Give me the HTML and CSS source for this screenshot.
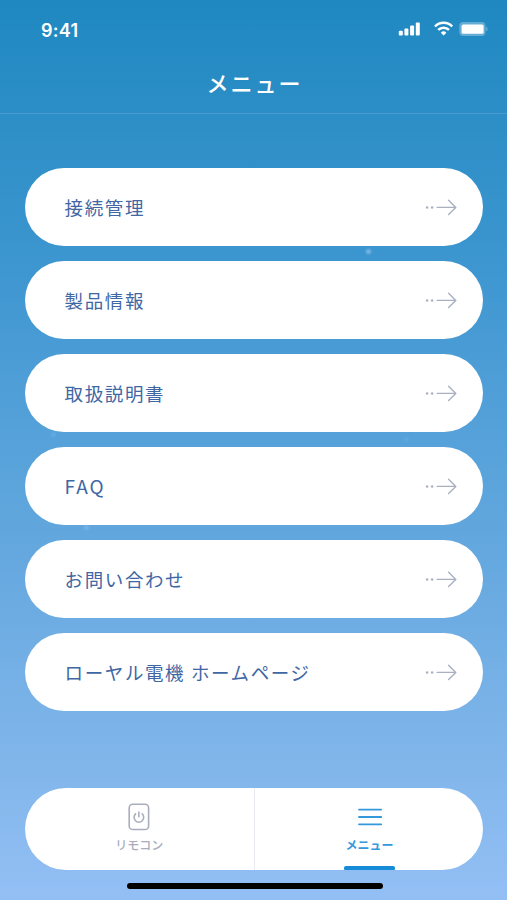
FILE: index.html
```html
<!DOCTYPE html>
<html lang="ja">
<head>
<meta charset="utf-8">
<title>メニュー</title>
<link rel="stylesheet" href="styles.css">
</head>
<body>
<svg class="defs" width="0" height="0" aria-hidden="true">
  <symbol id="arrow" viewBox="0 0 34 18">
    <path d="M12.2 9.4H30.8M23.6 2.2L30.8 9.4L23.6 16.6" fill="none" stroke="currentColor" stroke-width="1.4" stroke-linecap="round" stroke-linejoin="round"/>
    <circle cx="2.1" cy="9.4" r="1.25" fill="currentColor"/>
    <circle cx="7.1" cy="9.4" r="1.25" fill="currentColor"/>
  </symbol>
</svg>
<div class="screen">
  <i class="spark spark-a"></i><i class="spark spark-b"></i><i class="spark spark-c"></i><i class="spark spark-d"></i>
  <div class="status">
    <span class="time">9:41</span>
    <svg class="status-icons" viewBox="0 0 92 16" fill="#fff">
      <rect x="0.8" y="10.7" width="4" height="4.8" rx="1"/>
      <rect x="6.4" y="8.4" width="4" height="7.1" rx="1"/>
      <rect x="12.1" y="5.4" width="4" height="10.1" rx="1"/>
      <rect x="17.8" y="2.4" width="4" height="13.1" rx="1"/>
      <g fill="none" stroke="#fff" stroke-width="2.5">
        <path d="M37 6.5A12 12 0 0 1 54.2 6.5"/>
        <path d="M40.2 9.9A7.6 7.6 0 0 1 51 9.9"/>
      </g>
      <path d="M45.6 15.6L42.8 12.7A4 4 0 0 1 48.4 12.7Z"/>
      <rect x="61.3" y="2" width="26.2" height="14" rx="4" opacity=".3"/>
      <path d="M88.3 6.5Q90.8 9 88.3 11.5Z" opacity=".4"/>
      <rect x="63.6" y="4.6" width="22" height="9.2" rx="1.6"/>
    </svg>
  </div>
  <header class="header"><h1>メニュー</h1></header>
  <main class="menu">
    <a class="item"><span>接続管理</span><svg class="arrow"><use href="#arrow"/></svg></a>
    <a class="item"><span>製品情報</span><svg class="arrow"><use href="#arrow"/></svg></a>
    <a class="item"><span>取扱説明書</span><svg class="arrow"><use href="#arrow"/></svg></a>
    <a class="item"><span class="latin">FAQ</span><svg class="arrow"><use href="#arrow"/></svg></a>
    <a class="item"><span>お問い合わせ</span><svg class="arrow"><use href="#arrow"/></svg></a>
    <a class="item"><span>ローヤル電機 ホームページ</span><svg class="arrow"><use href="#arrow"/></svg></a>
  </main>
  <nav class="tabs">
    <a class="tab">
      <svg class="tab-icon" viewBox="0 0 28 28" fill="none" stroke="currentColor" stroke-width="1.6" stroke-linecap="round">
        <rect x="4.2" y="1.3" width="19.4" height="25.2" rx="3.6"/>
        <path d="M10.6 10.9A4.8 4.8 0 1 0 17.2 10.9M13.9 9V13.8"/>
      </svg>
      <span>リモコン</span>
    </a>
    <a class="tab active">
      <svg class="tab-icon" viewBox="0 0 28 28" fill="none" stroke="currentColor" stroke-width="1.8" stroke-linecap="round">
        <path d="M3 6.6H25.2M3 14H25.2M3 21.3H25.2"/>
      </svg>
      <span>メニュー</span>
    </a>
  </nav>
  <div class="home"></div>
</div>
</body>
</html>
```

FILE: styles.css
```css
* { box-sizing: border-box; }

body {
  margin: 0;
  font-family: "Noto Sans CJK JP", "Noto Sans", sans-serif;
}

.defs { display: none; }

.screen {
  position: relative;
  display: flex;
  flex-direction: column;
  height: 900px;
  overflow: hidden;
  background: linear-gradient(#1f88c1 0, #2c8ec6 110px, #3b95cf 250px, #519fd8 400px, #62a7de 540px, #73afe5 660px, #83b7eb 780px, #93bff5 900px);
}

.status {
  display: flex;
  justify-content: space-between;
  align-items: center;
  height: 58px;
  padding: 3px 17px 0 41px;
  color: #fff;
}

.time {
  font: 600 18px/20px Inter, sans-serif;
  letter-spacing: 0.3px;
}

.status-icons { width: 92px; height: 16px; margin-top: -5px; }

.header {
  display: flex;
  align-items: center;
  justify-content: center;
  height: 56px;
  padding-bottom: 8px;
  border-bottom: 1px solid #4b9bd0;
}

.header h1 {
  margin: 0;
  color: #fff;
  font-size: 22px;
  font-weight: 500;
  line-height: 30px;
  letter-spacing: 2px;
  text-indent: 2px;
}

.menu {
  display: flex;
  flex-direction: column;
  gap: 14.9px;
  padding: 54.3px 24.5px 0 25px;
}

.item {
  display: flex;
  align-items: center;
  justify-content: space-between;
  height: 78px;
  padding: 0 24px 0 39.6px;
  border-radius: 39px;
  background: #fff;
  color: #3f67a4;
  font-size: 18.5px;
  line-height: 28px;
  letter-spacing: 1.6px;
}

.latin { font-size: 19px; letter-spacing: 1.9px; }

.arrow { width: 34px; height: 18px; color: #a9b1c1; }

.tabs {
  display: grid;
  grid-template-columns: 1fr 1fr;
  height: 82px;
  margin: 76.8px 24.5px 0 25px;
  border-radius: 41px;
  background: #fff;
}

.tab {
  position: relative;
  display: flex;
  flex-direction: column;
  align-items: center;
  padding-top: 15px;
  color: #a9adbc;
  font-size: 12px;
  font-weight: 500;
  line-height: 18px;
}

.tab + .tab { border-left: 1px solid #e9ebf0; padding-left: 2px; }

.tab-icon { width: 28px; height: 28px; margin-bottom: 5px; }

.active { color: #3498dc; font-weight: 700; }

.active::after {
  content: "";
  position: absolute;
  bottom: 0;
  width: 51px;
  height: 4px;
  border-radius: 2px 2px 1px 1px;
  background: #168bd8;
}

.home {
  width: 256px;
  height: 6px;
  margin: 13.3px auto 0 126.5px;
  border-radius: 3px;
  background: #000;
}

.spark {
  position: absolute;
  width: 5px;
  height: 5px;
  border-radius: 50%;
  background: #a4d1f7;
  filter: blur(0.8px);
}

.spark-a { left: 366px; top: 249px; opacity: 0.6; }
.spark-b { left: 51px; top: 432px; opacity: 0.2; }
.spark-c { left: 84px; top: 525px; opacity: 0.3; }
.spark-d { left: 404px; top: 437px; opacity: 0.12; }
```
